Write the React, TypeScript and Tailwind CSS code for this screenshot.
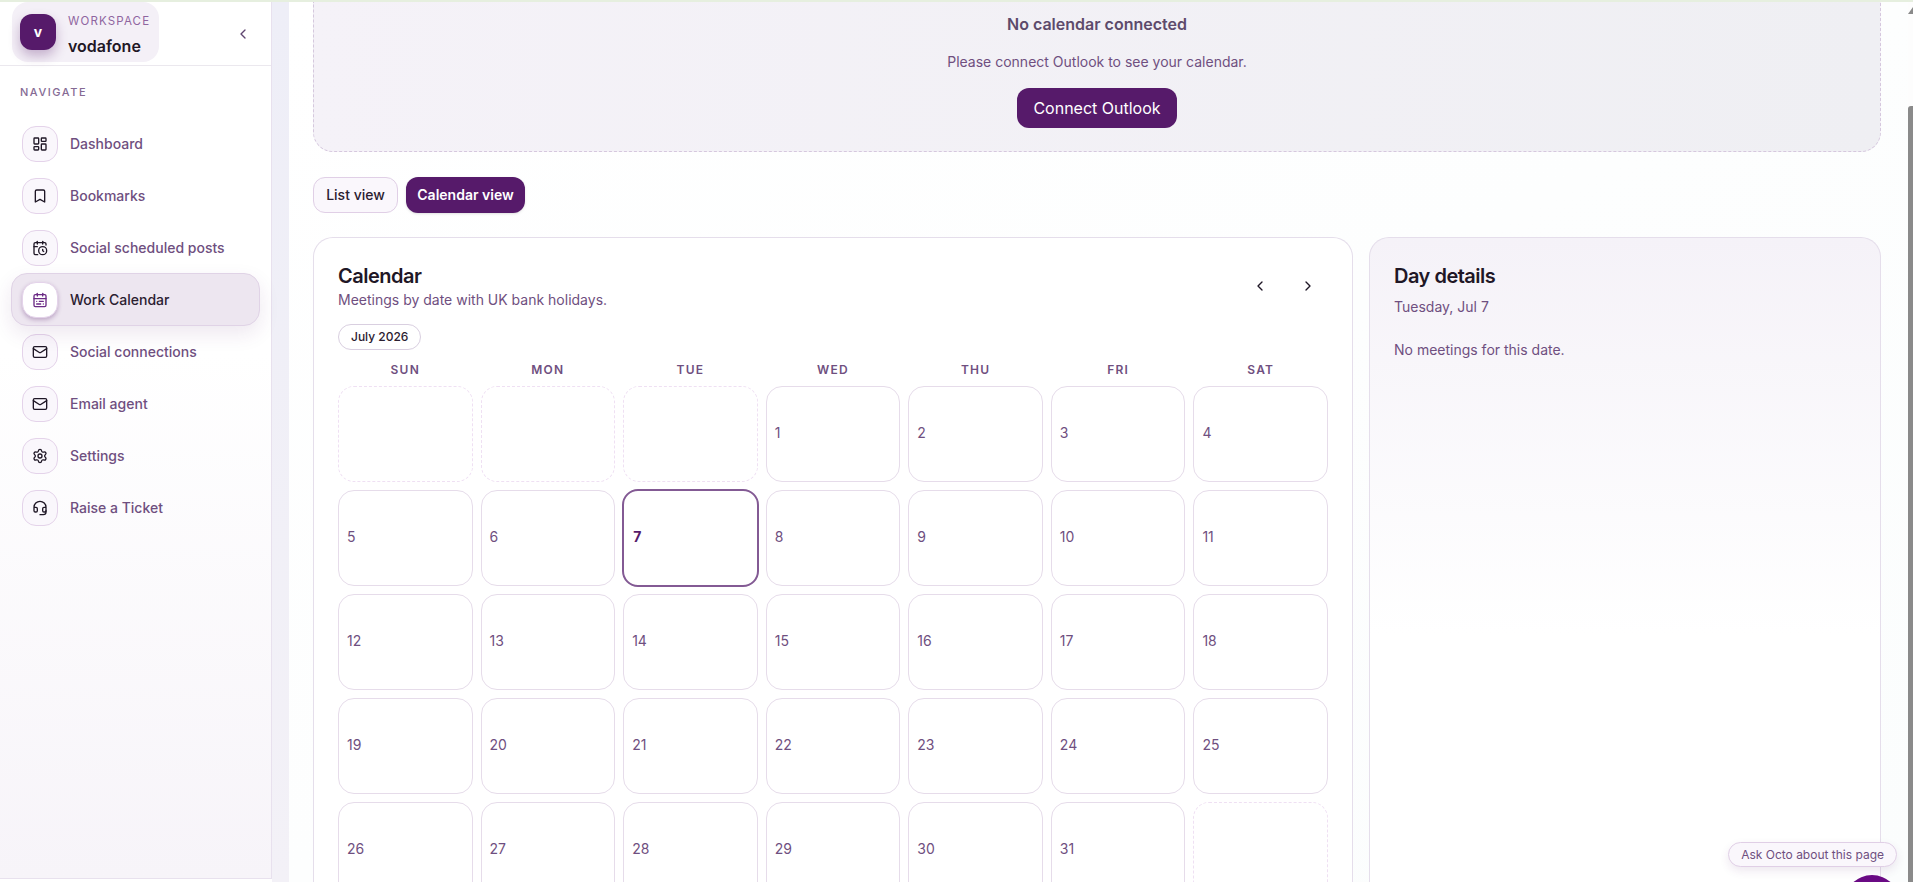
import { Bookmark, CalendarClock, CalendarRange, ChevronLeft, ChevronRight, Headset, LayoutDashboard, Mail, Settings } from "lucide-react";

const navItems = [
  { label: "Dashboard", icon: LayoutDashboard },
  { label: "Bookmarks", icon: Bookmark },
  { label: "Social scheduled posts", icon: CalendarClock },
  { label: "Work Calendar", icon: CalendarRange, active: true },
  { label: "Social connections", icon: Mail },
  { label: "Email agent", icon: Mail },
  { label: "Settings", icon: Settings },
  { label: "Raise a Ticket", icon: Headset },
];

const weekDays = ["SUN", "MON", "TUE", "WED", "THU", "FRI", "SAT"];
const leading = [0, 1, 2];
const days = Array.from({ length: 31 }, (_, i) => i + 1);

const Sidebar = () => {
  return (
    <aside className="flex flex-col w-[272px] h-[877px] shrink-0 border-r border-b border-[#e8e1ee] bg-gradient-to-b from-white from-40% to-[#f7f4f9]">
      <div className="flex items-center justify-between h-[64px] pl-3 pr-5 border-b border-[#ebe8ee]">
        <div className="flex items-center gap-3 w-[147px] h-[60px] pl-2 rounded-2xl bg-[#f4f0f7] -mt-[3px]">
          <div className="flex items-center justify-center w-9 h-9 rounded-xl bg-[#561a6a] text-white text-sm font-bold shadow-[0_6px_12px_rgba(86,26,106,0.3)]">v</div>
          <div className="flex flex-col gap-[7px] pt-1">
            <span className="text-[11.5px] leading-4 tracking-[0.1em] text-[#8f65a0]">WORKSPACE</span>
            <span className="text-base leading-5 font-semibold text-[#1f1726]">vodafone</span>
          </div>
        </div>
        <ChevronLeft size={16} className="text-[#5f4570]" />
      </div>
      <div className="px-5 pt-[18px] pb-[18px] text-[11px] leading-4 font-medium tracking-[0.14em] text-[#856a94]">NAVIGATE</div>
      <nav className="flex flex-col px-[11px]">
        {navItems.map((item) => {
          const Icon = item.icon;
          return (
            <div
              key={item.label}
              className={`flex items-center gap-3 px-[10px] rounded-2xl border ${item.active ? "h-[53px] -mt-px relative border-[#e0d3e6] bg-[#ede6f0] text-[#2b2030] shadow-[0_8px_20px_rgba(86,26,106,0.1)]" : "h-[52px] border-transparent text-[#6f4f80]"}`}
            >
              <div className={`flex items-center justify-center w-9 h-9 rounded-[14px] border border-[#e4d3ea] ${item.active ? "bg-white text-[#6b2a85] shadow-[0_2px_4px_rgba(86,26,106,0.3)]" : "bg-[#faf7fc] text-[#1f1726]"}`}>
                <Icon size={16} strokeWidth={2} />
              </div>
              <span className="text-sm font-medium">{item.label}</span>
            </div>
          );
        })}
      </nav>
    </aside>
  );
};

const CalendarCard = () => {
  return (
    <div className="flex flex-col w-[1040px] shrink-0 rounded-t-[20px] border-x border-t border-[#e5deeb] bg-white px-6 pt-6">
      <div className="flex items-start justify-between">
        <div className="flex flex-col">
          <span className="text-xl leading-7 font-semibold tracking-tight text-[#1f1726]">Calendar</span>
          <span className="text-sm leading-5 text-[#6f4f80]">Meetings by date with UK bank holidays.</span>
        </div>
        <div className="flex items-center gap-[32px] pt-4 pr-3 text-[#1f1726]">
          <ChevronLeft size={16} />
          <ChevronRight size={16} />
        </div>
      </div>
      <div className="mt-[14px] self-start rounded-full border border-[#d9cfe0] bg-white px-3 h-[26px] flex items-center text-xs font-medium text-[#2b2030]">July 2026</div>
      <div className="grid grid-cols-7 gap-2 mt-3">
        {weekDays.map((day) => (
          <div key={day} className="text-center text-xs leading-4 font-semibold tracking-[0.1em] text-[#6f4f80]">{day}</div>
        ))}
      </div>
      <div className="grid grid-cols-7 gap-2 mt-2">
        {leading.map((i) => (
          <div key={i} className="h-[96px] rounded-2xl border border-dashed border-[#efe0f3]" />
        ))}
        {days.map((day) => (
          <div
            key={day}
            className={`flex items-center rounded-2xl pb-[2px] text-sm ${day === 7 ? "-m-px h-[98px] border-2 border-[#835a94] pl-[9px] font-bold text-[#561a6a]" : "h-[96px] border border-[#e6dcea] pl-2 text-[#6f4f80]"}`}
          >
            {day}
          </div>
        ))}
        <div className="h-[96px] rounded-2xl border border-dashed border-[#efe0f3]" />
      </div>
    </div>
  );
};

const DayDetails = () => {
  return (
    <div className="flex flex-col w-[512px] shrink-0 rounded-t-[20px] border-x border-t border-[#e5deeb] bg-gradient-to-b from-[#f5f2f8] to-white to-[60%] px-6 pt-6">
      <span className="text-xl leading-7 font-semibold tracking-tight text-[#1f1726]">Day details</span>
      <span className="mt-[7px] text-sm leading-5 text-[#6f4f80]">Tuesday, Jul 7</span>
      <span className="mt-[23px] text-sm leading-5 text-[#6f4f80]">No meetings for this date.</span>
    </div>
  );
};

export default function App() {
  return (
    <div className="relative flex flex-col w-[1913px] h-[882px] overflow-hidden bg-white font-['Inter',sans-serif]">
      <div className="h-[2px] shrink-0 bg-[#e6efdf]" />
      <div className="flex flex-1 min-h-0">
        <Sidebar />
        <div className="w-[17px] shrink-0 bg-gradient-to-b from-[#eeeef7] to-[#f3f1f7]" />
        <main className="flex flex-col flex-1 min-w-0 pl-6 pr-[27px] bg-gradient-to-br from-white to-[#fbfdfd]">
          <div className="flex flex-col items-center shrink-0 h-[150px] rounded-b-[20px] border-x border-b border-dashed border-[#d6c8de] bg-gradient-to-r from-[#f5f2f8] to-[#efeff3] pt-[12px]">
            <span className="text-base leading-5 font-semibold text-[#5d4a6b]">No calendar connected</span>
            <span className="mt-[18px] text-sm leading-5 text-[#6f4f80]">Please connect Outlook to see your calendar.</span>
            <button className="mt-4 w-40 h-10 rounded-xl bg-[#561a6a] text-white text-base font-normal">Connect Outlook</button>
          </div>
          <div className="flex gap-2 mt-[25px] shrink-0">
            <button className="w-[85px] h-9 rounded-xl border border-[#e0cfe6] bg-[#faf7fc] text-sm font-medium text-[#2b2030]">List view</button>
            <button className="w-[119px] h-9 rounded-xl bg-[#561a6a] text-sm font-semibold text-white shadow-sm">Calendar view</button>
          </div>
          <div className="flex gap-4 mt-6">
            <CalendarCard />
            <DayDetails />
          </div>
        </main>
        <div className="relative w-[5px] shrink-0 bg-[#fdfdfd]">
          <div className="absolute left-0 top-[104px] bottom-0 w-full rounded-tl-[3px] bg-[#8a8a8a]" />
          <div className="absolute left-0 top-[5px] w-0 h-0 border-l-[5px] border-b-[7px] border-l-transparent border-b-[#8a8a8a]" />
        </div>
      </div>
      <div className="absolute right-[16px] bottom-[15px] flex items-center h-[25px] px-3 rounded-full border border-[#e0cfe6] bg-[#faf7fc] text-xs text-[#6f4f80] shadow-[0_4px_10px_rgba(86,26,106,0.1)]">Ask Octo about this page</div>
      <div className="absolute left-[1844px] top-[875px] w-14 h-14 rounded-full bg-[#6a0a84]" />
    </div>
  );
}
